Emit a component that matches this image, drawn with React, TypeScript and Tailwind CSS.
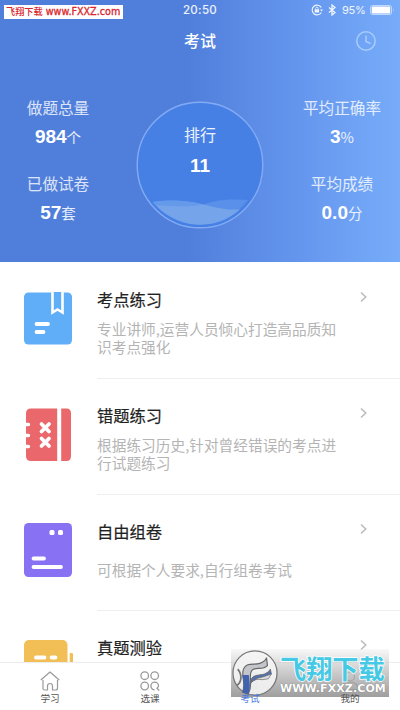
import type { ReactNode } from "react";

interface StatProps {
  label: string;
  value: string;
  unit: string;
}

interface Practice {
  title: string;
  description: string;
  icon: ReactNode;
}

const BookIcon = () => (
  <svg viewBox="0 0 48 54" className="w-12 h-[54px]">
    <rect y="0.5" width="48" height="52" rx="4.5" fill="#60aef8" />
    <path d="M28.5 -2V20.5L33.5 17.5L38.5 20.5V-2" fill="#60aef8" stroke="#fff" strokeWidth="2.6" />
    <path d="M12.5 32H24M12.5 40H19.5" stroke="#fff" strokeWidth="3.8" strokeLinecap="round" />
  </svg>
);

const WrongBookIcon = () => (
  <svg viewBox="0 0 48 54" className="w-12 h-[54px]">
    <path d="M7 .5H33.2V53H7Q2 53 2 48V5.5Q2 .5 7 .5ZM37.200 .5H42.5Q47 .5 47 5.5V48Q47 53 42.5 53H37.2Z" fill="#ea686c" />
    <path d="M1 16.5H4.5M1 27.5H4.5M1 38.5H4.5" stroke="#fff" strokeWidth="3.4" strokeLinecap="round" />
    <path d="M17.5 16L25 23.5M25 16L17.5 23.5M17.5 30.5L25 38M25 30.5L17.5 38" stroke="#fff" strokeWidth="3.8" strokeLinecap="round" />
  </svg>
);

const PaperIcon = () => (
  <svg viewBox="0 0 48 54" className="-mt-px w-12 h-[54px]">
    <rect width="48" height="54" rx="4.5" fill="#8871f2" />
    <rect x="25.5" y="7" width="5" height="5" rx="1.5" fill="#fff" />
    <rect x="34" y="7" width="5" height="5" rx="1.5" fill="#fff" />
    <path d="M9.5 35.5H44" stroke="none" />
    <path d="M9.5 35.5H20M9.5 44H37" stroke="#fff" strokeWidth="3.8" strokeLinecap="round" />
  </svg>
);

const ExamIcon = () => (
  <svg viewBox="0 0 50 54" className="w-[50px] h-[54px] max-w-none">
    <rect width="43.5" height="53" rx="5" fill="#f1bf55" />
    <rect x="45.7" y="13" width="3.3" height="30" rx="1" fill="#f1bf55" />
    <path d="M12 17.5H20.5M27.5 17.5H31.5" stroke="#fff" strokeWidth="3.8" strokeLinecap="round" />
  </svg>
);

const practices: Practice[] = [
  { title: "考点练习", description: "专业讲师,运营人员倾心打造高品质知识考点强化", icon: <BookIcon /> },
  { title: "错题练习", description: "根据练习历史,针对曾经错误的考点进行试题练习", icon: <WrongBookIcon /> },
  { title: "自由组卷", description: "可根据个人要求,自行组卷考试", icon: <PaperIcon /> },
  { title: "真题测验", description: "", icon: <ExamIcon /> },
];

function Stat({ label, value, unit }: StatProps) {
  return (
    <div className="flex flex-col items-center h-[76px] text-white">
      <span className="text-[15.6px] leading-6 text-white/80 whitespace-nowrap">{label}</span>
      <p className="mt-[3px] leading-7 whitespace-nowrap">
        <span className="font-['Liberation_Sans'] text-[19px] font-bold">{value}</span>
        <span className="text-[14.5px] text-white/85">{unit}</span>
      </p>
    </div>
  );
}

function StatusBar() {
  return (
    <div className="relative flex h-5 items-center justify-center text-white/90">
      <span className="pt-[2px] font-['Inter'] text-[11.5px] font-medium tracking-[0.3px]">20:50</span>
      <div className="absolute right-[5px] top-0 flex h-5 items-center">
        <svg viewBox="0 0 12 12" className="w-3 h-3 mr-[5px]" fill="none" stroke="currentColor">
          <path d="M10.3 3.5A4.9 4.9 0 1 0 10.3 8.5" strokeWidth="1.1" />
          <path d="M9 5.5H12L10.5 7.5Z" fill="currentColor" stroke="none" />
          <rect x="3.7" y="5.3" width="4.4" height="3.2" fill="currentColor" stroke="none" />
          <path d="M4.6 5.5V4.5A1.3 1.3 0 0 1 7.2 4.5V5.5" strokeWidth=".8" />
        </svg>
        <svg viewBox="0 0 8 12" className="w-2 h-3 mr-[6px]" fill="none" stroke="currentColor" strokeWidth="1.3">
          <path d="M1 3.5L7 8.5L4 11V1L7 3.5L1 8.5" />
        </svg>
        <span className="mr-1 w-[24px] font-['Inter'] text-[11px] tracking-[-0.2px]">95%</span>
        <svg viewBox="0 0 25 10" className="w-[25px] h-[10px]">
          <rect x="0.5" y="0.5" width="21" height="9" rx="2" fill="none" stroke="#fff" strokeOpacity=".55" />
          <rect x="1.7" y="1.5" width="18.5" height="7" rx="1" fill="#fff" />
          <path d="M23 3.5Q24.5 5 23 6.5Z" fill="#fff" fillOpacity=".6" />
        </svg>
      </div>
      <div className="absolute left-1 top-[5px] flex h-[14px] w-[119px] items-center gap-[3px] bg-white pl-[2px] whitespace-nowrap text-[#d8262c]">
        <span className="text-[9.2px] font-medium">飞翔下载</span>
        <span className="font-['DejaVu_Sans'] text-[9.6px] [-webkit-text-stroke:0.3px_#d8262c]">www.FXXZ.com</span>
      </div>
    </div>
  );
}

function RankCircle() {
  return (
    <div className="relative mt-[41px] h-[128px] w-[128px]">
      <svg viewBox="0 0 128 128" className="absolute inset-0">
        <circle cx="64" cy="64" r="62.8" fill="#4680e5" stroke="#83abf4" strokeWidth="1.4" />
        <path d="M64 105C80 98 97 98 112 99A60 60 0 0 1 64 123.5Z" fill="#5a90e9" />
        <path d="M17 101C40 98 58 101 74 105C86 108 94 109 104 108.5A60 60 0 0 1 17 101Z" fill="#76a4eb" />
        <path d="M17 101C36 98 55 100 66 103.5C50 107 34 105 19 104Z" fill="#6599ea" />
      </svg>
      <div className="relative flex flex-col items-center pt-[21px] text-white">
        <span className="text-[16px] leading-6 text-white/90">排行</span>
        <span className="mt-2 font-['Liberation_Sans'] text-[19px] leading-6 font-bold">11</span>
      </div>
    </div>
  );
}

function PracticeRow({ title, description, icon }: Practice) {
  return (
    <div className="flex h-[116px] shrink-0 pl-6">
      <div className="mt-7 w-12 shrink-0 pt-px">{icon}</div>
      <div className="ml-[25px] flex flex-1 flex-col border-b border-[#eeeeee]">
        <div className="flex items-start justify-between pt-6 pr-[33px]">
          <h2 className="text-[16.3px] leading-6 text-[#222] [-webkit-text-stroke:0.2px_#222]">{title}</h2>
          <svg viewBox="0 0 7 12" className="mt-1 w-[7px] h-3" fill="none" stroke="#bdbdbd" strokeWidth="1.6">
            <path d="M1 1.5L5.700 6L1 10.5" />
          </svg>
        </div>
        <div className="mt-[8px] flex h-[38px] w-[246px] items-center">
          <p className="text-[14.7px] leading-[18px] text-[#b4b4b4]">{description}</p>
        </div>
      </div>
    </div>
  );
}

function TabBar() {
  return (
    <nav className="grid h-12 shrink-0 grid-cols-4 border-t border-[#ededed] bg-white text-[9.6px] text-[#555]">
      <div className="flex flex-col items-center pt-2">
        <svg viewBox="0 0 20 20" className="w-5 h-5" fill="none" stroke="#999" strokeWidth="1.2" strokeLinejoin="round">
          <path d="M.8 9L10 1L19.2 9M3 9V17.5Q3 19 4.5 19H7.5V15Q7.5 12.5 10 12.5T12.5 15V19H15.5Q17.5 19 17.5 17V9" />
        </svg>
        <span className="leading-[14px]">学习</span>
      </div>
      <div className="flex flex-col items-center pt-2">
        <svg viewBox="0 0 20 20" className="w-5 h-5" fill="none" stroke="#999" strokeWidth="1.3">
          <circle cx="4.7" cy="4.7" r="3.8" />
          <circle cx="14.7" cy="4.7" r="3.8" />
          <circle cx="4.7" cy="15" r="3.8" />
          <path d="M14.7 18.8A3.8 3.8 0 1 1 18.5 15Q18.4 16 17 17.2L19.2 19.5" />
        </svg>
        <span className="leading-[14px]">选课</span>
      </div>
      <div className="flex flex-col items-center pt-2 text-[#4b79df]">
        <svg viewBox="0 0 20 20" className="w-5 h-5">
          <rect x="2" y="1" width="16" height="18" rx="2" fill="#4b79df" />
        </svg>
        <span className="relative z-20 leading-[14px]">考试</span>
      </div>
      <div className="flex flex-col items-center pt-2">
        <svg viewBox="0 0 20 20" className="w-5 h-5" fill="none" stroke="#777" strokeWidth="1.2">
          <circle cx="10" cy="5.5" r="4.5" />
          <path d="M2 19Q2 11 10 11T18 19Z" />
        </svg>
        <span className="relative z-20 leading-[14px]">我的</span>
      </div>
    </nav>
  );
}

function SiteBadge() {
  return (
    <div className="absolute left-[231px] top-[649px] z-10 flex h-[48px] w-[158px] bg-linear-to-b from-[#dddddd]/20 via-[#bdbdbd]/80 to-[#8d8d8d]/85">
      <svg viewBox="0 0 48 48" className="ml-px w-[46px] h-[48px] shrink-0">
        <circle cx="24" cy="24" r="23" fill="#f4f4f4" fillOpacity=".9" stroke="#777" strokeWidth="1.3" />
        <path d="M11 44C15 34 9 27 12 20C15 12 23 16 29 14Q35 12 36 8L37 16C32 22 25 17 21 21C16 26 23 35 17 46Z" fill="#c3c5ca" stroke="#666" strokeWidth="1.2" />
        <path d="M11 26H17.500C18 32 20 38 17 46L11 44C14 35 11 31 11 26Z" fill="#4163ad" />
        <path d="M6 20C11 26 10 34 5 37" fill="none" stroke="#777" strokeWidth="1.8" />
        <path d="M20 34C19 25 28 27 34 25Q39 23 40 20L41 25C37 31 27 27 20 34Z" fill="#5272b3" stroke="#666" strokeWidth="1" />
        <path d="M24 30Q34 28 41 25L38 30Q32 32 24 30Z" fill="#ddd" stroke="#666" strokeWidth=".7" />
      </svg>
      <div className="flex flex-1 flex-col items-start whitespace-nowrap pl-[2px]">
        <span className="mt-[4px] text-[26.2px] leading-[30px] font-bold text-[#46c9e5] [-webkit-text-stroke:1.5px_white] [paint-order:stroke_fill]">飞翔下载</span>
        <span className="font-['DejaVu_Sans'] text-[11px] leading-[11px] font-bold tracking-[0.1px] text-white [text-shadow:0_0_1px_#666]">WWW.FXXZ.COM</span>
      </div>
    </div>
  );
}

export default function App() {
  return (
    <div className="relative flex h-[710px] w-[400px] flex-col overflow-hidden bg-white font-['Noto_Sans_CJK_SC',sans-serif]">
      <header className="h-[262px] shrink-0 bg-linear-to-r from-[#507fdb] from-47% via-[#6596ee] via-75% to-[#77acf9]">
        <StatusBar />
        <div className="relative flex h-10 items-center justify-center">
          <h1 className="text-[16px] leading-6 font-medium text-white">考试</h1>
          <svg viewBox="0 0 20 20" className="absolute right-6 top-[11px] w-5 h-5" fill="none" stroke="#a9ccfd" strokeWidth="1.5">
            <circle cx="10" cy="10" r="9.2" />
            <path d="M10 4.5V10.5L14.5 12.5" />
          </svg>
        </div>
        <div className="flex justify-between">
          <div className="w-[116px] pt-[35px]">
            <Stat label="做题总量" value="984" unit="个" />
            <Stat label="已做试卷" value="57" unit="套" />
          </div>
          <RankCircle />
          <div className="w-[116px] pt-[35px]">
            <Stat label="平均正确率" value="3" unit="%" />
            <Stat label="平均成绩" value="0.0" unit="分" />
          </div>
        </div>
      </header>

      <main className="flex min-h-0 flex-1 flex-col overflow-hidden pt-px">
        {practices.map((item) => (
          <PracticeRow key={item.title} {...item} />
        ))}
      </main>

      <TabBar />
      <SiteBadge />
    </div>
  );
}
